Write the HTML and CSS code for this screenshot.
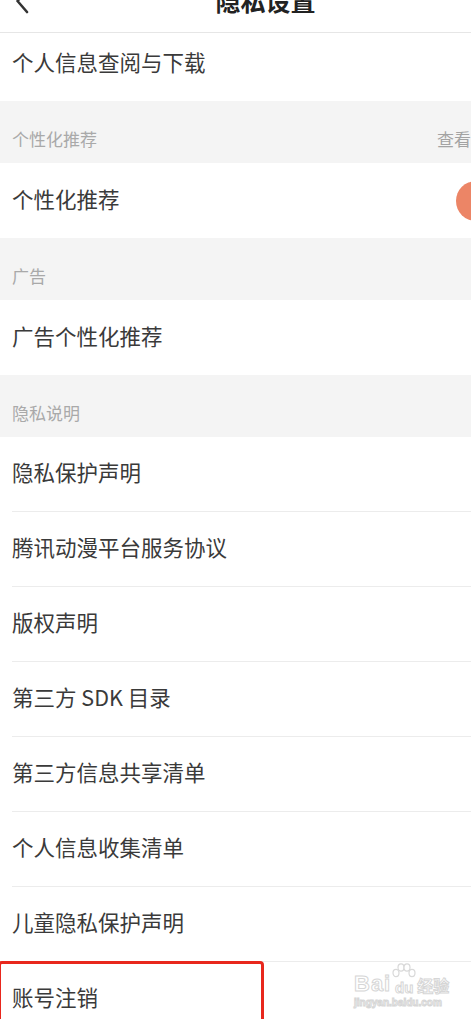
FILE: index.html
```html
<!DOCTYPE html>
<html>
<head>
    <meta charset="UTF-8">
    <title>隐私设置</title>
    <link rel="stylesheet" href="styles.css">
</head>
<body>
<div class="page">
    <!-- 顶部导航 -->
    <header class="nav">
        <span class="nav-back">
            <svg width="14" height="26" viewBox="0 0 14 26">
                <path d="M12 2 L2.5 13 L12 24" fill="none" stroke="#333" stroke-width="2.6" stroke-linecap="round" stroke-linejoin="round"/>
            </svg>
        </span>
        <h1 class="nav-title">隐私设置</h1>
        <span></span>
    </header>

    <div class="cell cell-first">个人信息查阅与下载</div>

    <div class="group-title">
        个性化推荐
        <span class="more">查看详情
            <svg width="8" height="12" viewBox="0 0 8 12">
                <path d="M1.5 1 L6.5 6 L1.5 11" fill="none" stroke="#b0b0b0" stroke-width="1.5"/>
            </svg>
        </span>
    </div>
    <div class="cell">个性化推荐<span class="switch"></span></div>

    <div class="group-title">广告</div>
    <div class="cell">广告个性化推荐</div>

    <div class="group-title">隐私说明</div>
    <ul class="list">
        <li>隐私保护声明</li>
        <li>腾讯动漫平台服务协议</li>
        <li>版权声明</li>
        <li>第三方 SDK 目录</li>
        <li>第三方信息共享清单</li>
        <li>个人信息收集清单</li>
        <li>儿童隐私保护声明</li>
        <li>账号注销</li>
    </ul>

    <!-- 红框标注 -->
    <div class="mark"></div>

    <!-- 水印 -->
    <div class="watermark">
        <div class="wm-top">
            <span class="wm-bai">Bai</span>
            <span class="wm-du">
                <svg class="wm-paw" width="24" height="16" viewBox="0 0 24 16">
                    <g fill="#fff" stroke="#d9d9d9" stroke-width="1.2">
                        <ellipse cx="4" cy="10" rx="3" ry="3.6"/>
                        <ellipse cx="9" cy="4.5" rx="3" ry="3.6"/>
                        <ellipse cx="15" cy="4.5" rx="3" ry="3.6"/>
                        <ellipse cx="20" cy="10" rx="3" ry="3.6"/>
                    </g>
                </svg>
                du
            </span>
            <span class="wm-jy">经验</span>
        </div>
        <div class="wm-url">jingyan.baidu.com</div>
    </div>
</div>
</body>
</html>
```

FILE: styles.css
```css
* {
    box-sizing: border-box;
}

html, body, ul, li, h1 {
    margin: 0;
    padding: 0;
}

body {
    background: #fff;
    overflow: hidden;
    font-family: "Noto Sans CJK SC", "Noto Sans", sans-serif;
}

.page {
    width: 531px;
    position: relative;
    overflow: hidden;
}

.nav {
    height: 64px;
    margin-top: -31px;
    border-bottom: 1px solid #e6e6e6;
    display: grid;
    grid-template-columns: 1fr auto 1fr;
    align-items: center;
}

.nav-back {
    display: flex;
    padding-left: 15px;
}

.nav-title {
    font-size: 25px;
    font-weight: 700;
    line-height: 1;
    color: #222;
}

.cell {
    height: 75px;
    display: flex;
    align-items: center;
    justify-content: space-between;
    padding: 0 11px 5px 12px;
    font-size: 21.5px;
    color: #3a3a3a;
}

.cell-first {
    height: 68px;
    padding-bottom: 11px;
}

.group-title {
    height: 62px;
    background: #f4f4f4;
    display: flex;
    align-items: center;
    justify-content: space-between;
    padding: 12px 13px 0 12px;
    font-size: 17px;
    color: #a9a9a9;
}

.more {
    display: flex;
    align-items: center;
    gap: 5px;
    color: #a3a3a3;
}

.switch {
    width: 64px;
    height: 40px;
    border-radius: 20px;
    background: #ec8566;
    flex-shrink: 0;
    margin-top: 5px;
}

.list {
    list-style: none;
}

.list li {
    height: 75px;
    margin-left: 12px;
    padding: 0 11px 5px 0;
    border-bottom: 1px solid #ececec;
    display: flex;
    align-items: center;
    font-size: 21.5px;
    color: #3a3a3a;
}

.mark {
    position: absolute;
    left: -2px;
    top: 961px;
    width: 266px;
    height: 90px;
    border: 3.5px solid #e8271d;
    border-radius: 4px;
}

.watermark {
    position: absolute;
    left: 354px;
    top: 963px;
    white-space: nowrap;
    font-family: "Liberation Sans", Arial, sans-serif;
    font-weight: 700;
    color: #fff;
    -webkit-text-stroke: 1px #d6d6d6;
}

.wm-top {
    display: flex;
    align-items: flex-end;
    height: 32px;
}

.wm-bai {
    font-size: 22px;
    line-height: 22px;
    letter-spacing: 1px;
}

.wm-du {
    display: flex;
    flex-direction: column;
    align-items: center;
    font-size: 15px;
    line-height: 15px;
    margin-left: 1px;
}

.wm-paw {
    display: block;
    margin-bottom: 1px;
}

.wm-jy {
    font-family: "Noto Sans CJK SC", sans-serif;
    font-size: 16px;
    line-height: 20px;
    margin-left: 1px;
}

.wm-url {
    font-size: 10px;
    line-height: 12px;
    margin-top: 2px;
}
```
